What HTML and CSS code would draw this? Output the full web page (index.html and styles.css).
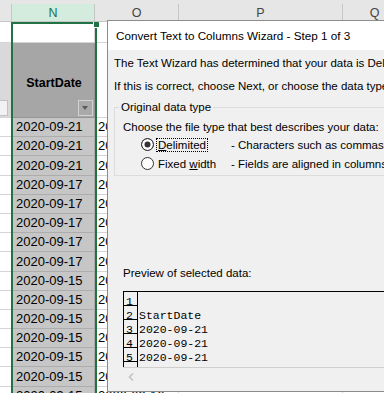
FILE: index.html
```html
<!DOCTYPE html>
<html>
  <head>
    <meta charset="utf-8">
    <title>Convert Text to Columns Wizard</title>
    <link rel="stylesheet" href="styles.css">
  </head>
  <body>
    <div class="sheet">
      <div class="strip"></div>

      <div class="row row--heads">
        <div class="head"></div>
        <div class="head head--selected">N</div>
        <div class="head">O</div>
        <div class="head">P</div>
        <div class="head">Q</div>
      </div>

      <div class="row row--first">
        <div class="cell"></div>
        <div class="cell cell--active"></div>
        <div class="cell"></div>
        <div class="cell"></div>
        <div class="cell"></div>
      </div>

      <div class="row row--titles">
        <div class="cell cell--shade">
          <span class="filter filter--light"></span>
        </div>
        <div class="cell cell--title">
          StartDate
          <span class="filter"></span>
        </div>
        <div class="cell"></div>
        <div class="cell"></div>
        <div class="cell"></div>
      </div>

      <div class="row row--data"><div class="cell"></div><div class="cell cell--picked">2020-09-21</div><div class="cell">2020-09-25</div><div class="cell"></div><div class="cell"></div></div>
      <div class="row row--data"><div class="cell"></div><div class="cell cell--picked">2020-09-21</div><div class="cell">2020-09-25</div><div class="cell"></div><div class="cell"></div></div>
      <div class="row row--data"><div class="cell"></div><div class="cell cell--picked">2020-09-21</div><div class="cell">2020-09-25</div><div class="cell"></div><div class="cell"></div></div>
      <div class="row row--data"><div class="cell"></div><div class="cell cell--picked">2020-09-17</div><div class="cell">2020-09-18</div><div class="cell"></div><div class="cell"></div></div>
      <div class="row row--data"><div class="cell"></div><div class="cell cell--picked">2020-09-17</div><div class="cell">2020-09-18</div><div class="cell"></div><div class="cell"></div></div>
      <div class="row row--data"><div class="cell"></div><div class="cell cell--picked">2020-09-17</div><div class="cell">2020-09-18</div><div class="cell"></div><div class="cell"></div></div>
      <div class="row row--data"><div class="cell"></div><div class="cell cell--picked">2020-09-17</div><div class="cell">2020-09-18</div><div class="cell"></div><div class="cell"></div></div>
      <div class="row row--data"><div class="cell"></div><div class="cell cell--picked">2020-09-17</div><div class="cell">2020-09-18</div><div class="cell"></div><div class="cell"></div></div>
      <div class="row row--data"><div class="cell"></div><div class="cell cell--picked">2020-09-15</div><div class="cell">2020-09-16</div><div class="cell"></div><div class="cell"></div></div>
      <div class="row row--data"><div class="cell"></div><div class="cell cell--picked">2020-09-15</div><div class="cell">2020-09-16</div><div class="cell"></div><div class="cell"></div></div>
      <div class="row row--data"><div class="cell"></div><div class="cell cell--picked">2020-09-15</div><div class="cell">2020-09-16</div><div class="cell"></div><div class="cell"></div></div>
      <div class="row row--data"><div class="cell"></div><div class="cell cell--picked">2020-09-15</div><div class="cell">2020-09-16</div><div class="cell"></div><div class="cell"></div></div>
      <div class="row row--data"><div class="cell"></div><div class="cell cell--picked">2020-09-15</div><div class="cell">2020-09-16</div><div class="cell"></div><div class="cell"></div></div>
      <div class="row row--data"><div class="cell"></div><div class="cell cell--picked">2020-09-15</div><div class="cell">2020-09-16</div><div class="cell"></div><div class="cell"></div></div>
      <div class="row row--data"><div class="cell"></div><div class="cell cell--picked">2020-09-15</div><div class="cell">2020-09-16</div><div class="cell"></div><div class="cell"></div></div>

      <div class="selection"></div>
      <div class="selection__handle"></div>
    </div>

    <section class="dialog">
      <div class="dialog__title">Convert Text to Columns Wizard - Step 1 of 3</div>

      <div class="dialog__body">
        <p class="dialog__text">The Text Wizard has determined that your data is Delimited.</p>
        <p class="dialog__text">If this is correct, choose Next, or choose the data type that best describes your data.</p>

        <fieldset class="group">
          <legend class="group__legend">Original data type</legend>
          <p class="group__hint">Choose the file type that best describes your data:</p>

          <div class="option">
            <span class="radio radio--checked"></span>
            <span class="option__label"><span class="focus"><u>D</u>elimited</span></span>
            <span class="option__desc">- Characters such as commas or tabs separate each field.</span>
          </div>

          <div class="option">
            <span class="radio"></span>
            <span class="option__label">Fixed <u>w</u>idth</span>
            <span class="option__desc">- Fields are aligned in columns with spaces between each field.</span>
          </div>
        </fieldset>

        <p class="preview-label">Preview of selected data:</p>

        <div class="preview">
          <div class="preview__data">
            <div class="preview__row"><span class="preview__num">1</span><span class="preview__text"></span></div>
            <div class="preview__row"><span class="preview__num">2</span><span class="preview__text">StartDate</span></div>
            <div class="preview__row"><span class="preview__num">3</span><span class="preview__text">2020-09-21</span></div>
            <div class="preview__row"><span class="preview__num">4</span><span class="preview__text">2020-09-21</span></div>
            <div class="preview__row"><span class="preview__num">5</span><span class="preview__text">2020-09-21</span></div>
            <div class="preview__row"><span class="preview__num"></span><span class="preview__text"></span></div>
          </div>
          <div class="preview__scroll">
            <svg width="6" height="8" viewBox="0 0 6 8">
              <polyline points="5,0.5 1.5,4 5,7.5" fill="none" stroke="#c2c2c2" stroke-width="1.6"/>
            </svg>
          </div>
        </div>
      </div>
    </section>
  </body>
</html>
```

FILE: styles.css
```css
:root {
  --excel-green: #217346;
  --grid: #d4d4d4;
  --head-gray: #e6e6e6;
  --head-line: #c6c6c6;
  --picked: #c6c6c6;
  --picked-line: #adadad;
  --dialog-gray: #f0f0f0;
}

body {
  margin: 0;
  width: 384px;
  height: 393px;
  overflow: hidden;
  position: relative;
  background: #ffffff;
  font-family: 'Liberation Sans', Arial, sans-serif;
  color: #000000;
}

/* spreadsheet */

.sheet {
  position: relative;
  width: 407px;
}

.strip {
  height: 4px;
  background: var(--head-gray);
}

.row {
  display: grid;
  grid-template-columns: 12px 83px 84px 164px 64px;
}

.row--heads {
  height: 18px;
}

.row--first {
  height: 21px;
}

.row--titles {
  height: 75px;
}

.row--data {
  height: 19.2px;
}

.head,
.cell {
  box-sizing: border-box;
  border-right: 1px solid var(--grid);
  border-bottom: 1px solid var(--grid);
  overflow: hidden;
  white-space: nowrap;
}

.head {
  display: flex;
  align-items: center;
  justify-content: center;
  background: var(--head-gray);
  border-color: var(--head-line);
  font-size: 12.5px;
  color: #444444;
}

.head--selected {
  background: #d3ecdd;
  color: var(--excel-green);
}

.cell {
  position: relative;
  display: flex;
  align-items: flex-end;
  padding: 0 0 1px 3px;
  font-size: 13px;
  line-height: 16px;
}

.cell--active {
  background: #ffffff;
}

.cell--shade {
  background: #d9d9d9;
}

.cell--title {
  align-items: center;
  justify-content: center;
  padding: 5px 0 0 2px;
  background: #a6a6a6;
  border-color: #969696;
  font-weight: bold;
  font-size: 12.5px;
}

.cell--picked {
  background: var(--picked);
  border-color: var(--picked-line);
  padding-left: 4px;
}

.filter {
  position: absolute;
  right: 1px;
  bottom: 1px;
  width: 15px;
  height: 16px;
  box-sizing: border-box;
  border: 1px solid #d2d2d2;
  background: #a9a9a9;
}

.filter::after {
  content: '';
  position: absolute;
  left: 3px;
  top: 5px;
  border-left: 3.5px solid transparent;
  border-right: 3.5px solid transparent;
  border-top: 4px solid #5a5a5a;
}

.filter--light {
  right: 3px;
  width: 14px;
  border-color: #c2c2c2;
  background: #f2f2f2;
}

.filter--light::after {
  left: -2px;
  border-top-color: #6b6b6b;
}

.selection {
  position: absolute;
  left: 11px;
  top: 22px;
  width: 86px;
  height: 400px;
  box-sizing: border-box;
  border: 2px solid var(--excel-green);
  border-bottom: none;
}

.selection__handle {
  position: absolute;
  left: 93px;
  top: 22px;
  width: 5px;
  height: 5px;
  background: var(--excel-green);
  border-bottom: 1px solid #ffffff;
  border-left: 1px solid #ffffff;
}

/* dialog */

.dialog {
  position: absolute;
  left: 107px;
  top: 20px;
  width: 300px;
  height: 372px;
  box-sizing: border-box;
  border: 1px solid #8c8c8c;
  border-right: none;
  background: var(--dialog-gray);
  font-size: 11.5px;
  overflow: hidden;
  white-space: nowrap;
}

.dialog__title {
  display: flex;
  align-items: center;
  height: 29px;
  padding-left: 8px;
  background: #ffffff;
  font-size: 11.7px;
}

.dialog__body {
  padding: 2px 0 0 6px;
}

.dialog__text {
  margin: 0;
  line-height: 23px;
}

.group {
  margin: 2px 0 0;
  padding: 0 0 2px 8px;
  min-width: 0;
  border: 1px solid #dcdcdc;
  border-right: none;
}

.group__legend {
  margin-left: -4px;
  padding: 0 2px;
  line-height: 14px;
}

.group__hint {
  margin: 6px 0 0;
  line-height: 15px;
}

.option {
  display: flex;
  align-items: center;
  height: 19px;
  padding-left: 18px;
}

.radio {
  flex: none;
  width: 13px;
  height: 13px;
  box-sizing: border-box;
  margin-right: 4px;
  border: 1px solid #333333;
  border-radius: 50%;
  background: #ffffff;
}

.radio--checked {
  background: #333333;
  box-shadow: inset 0 0 0 2.5px #ffffff;
}

.option__label {
  flex: none;
  width: 73px;
}

.focus {
  margin-left: -1px;
  padding: 0 1px;
  outline: 1px dotted #000000;
}

.preview-label {
  margin: 89px 0 0 9px;
  line-height: 16px;
}

.preview {
  margin: 10px 0 0 9px;
}

.preview__data {
  height: 75px;
  overflow: hidden;
  border-top: 1px solid #000000;
  border-left: 1px solid #000000;
}

.preview__row {
  display: flex;
  height: 14px;
  font-family: 'Liberation Mono', 'Courier New', monospace;
  font-size: 11.5px;
}

.preview__num {
  flex: none;
  width: 14px;
  box-sizing: border-box;
  padding: 4px 0 0 2px;
  border-right: 1px solid #000000;
  border-bottom: 1px solid #000000;
  line-height: 12px;
}

.preview__text {
  padding: 4px 0 0 1px;
  line-height: 12px;
}

.preview__scroll {
  height: 24px;
  border-top: 1px solid #cfcfcf;
  padding: 5px 0 0 5px;
  box-sizing: border-box;
}

.preview__scroll svg {
  display: block;
}
```
